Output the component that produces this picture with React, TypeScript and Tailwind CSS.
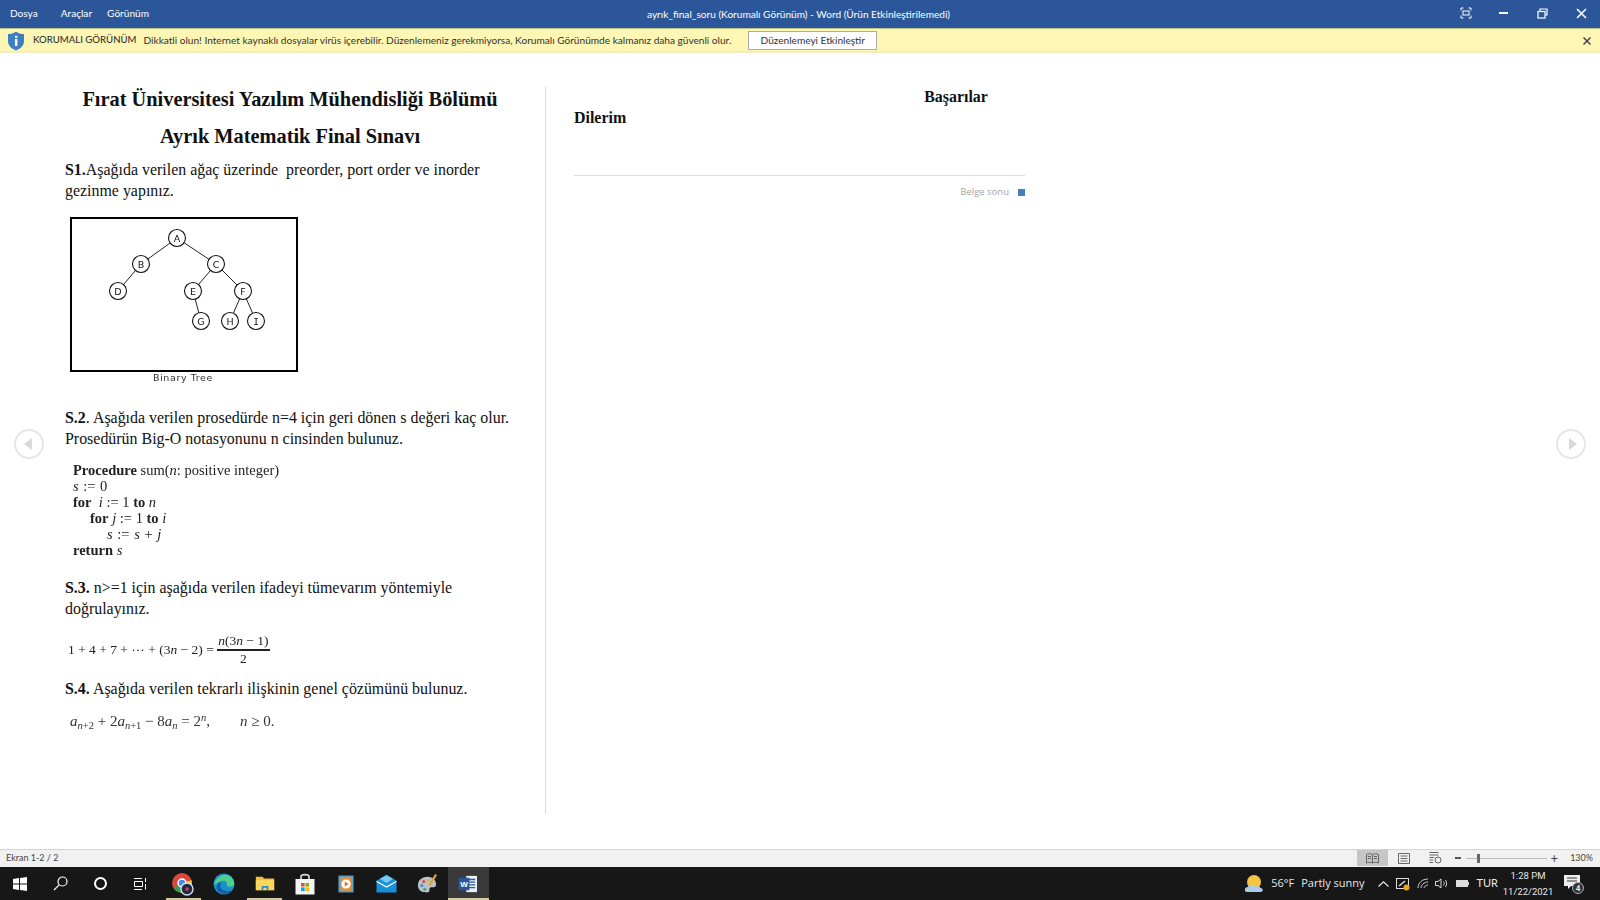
const serif = "font-['Liberation_Serif',serif]"

function Shield() {
  return (
    <svg width="18" height="20" viewBox="0 0 18 20">
      <path d="M9 0.5 C11.5 2.5 14 3 17 3 V10 C17 15 13 18 9 19.5 C5 18 1 15 1 10 V3 C4 3 6.5 2.5 9 0.5Z" fill="#3f7fc1" />
      <rect x="8" y="8" width="2.4" height="7" fill="#fff" />
      <rect x="8" y="4.8" width="2.4" height="2" fill="#fff" />
    </svg>
  )
}

function Tree() {
  const nodes: [string, number, number][] = [
    ['A', 107, 21], ['B', 71, 47], ['C', 146, 47], ['D', 48, 74], ['E', 123, 74],
    ['F', 173, 74], ['G', 131, 104], ['H', 160, 104], ['I', 186, 104],
  ]
  const edges = [[0, 1], [0, 2], [1, 3], [2, 4], [2, 5], [4, 6], [5, 7], [5, 8]]
  return (
    <svg width="228" height="155" viewBox="0 0 228 155" className="block">
      <rect x="1" y="1" width="226" height="153" fill="#fff" stroke="#000" strokeWidth="2" />
      {edges.map(([a, b], i) => (
        <line key={i} x1={nodes[a][1]} y1={nodes[a][2]} x2={nodes[b][1]} y2={nodes[b][2]} stroke="#222" strokeWidth="1" />
      ))}
      {nodes.map(([t, x, y]) => (
        <g key={t}>
          <circle cx={x} cy={y} r="8.5" fill="#fff" stroke="#111" strokeWidth="1.1" />
          <text x={x} y={y + 3.5} textAnchor="middle" fontSize="9.5" fontFamily={t === 'I' ? "'DejaVu Sans Mono',monospace" : "'DejaVu Sans',sans-serif"} fill="#111">{t}</text>
        </g>
      ))}
    </svg>
  )
}

function Body({ children, className = '' }: { children: React.ReactNode; className?: string }) {
  return <p className={`text-[15.93px] leading-[21px] text-[#111] ${className}`}>{children}</p>
}

function ChromeIcon() {
  return (
    <svg width="24" height="24" viewBox="0 0 24 24">
      <circle cx="11" cy="11" r="10" fill="#d9483b" />
      <path d="M11 11 L2.5 16 A10 10 0 0 0 14 20.5Z" fill="#3a9b50" />
      <path d="M11 11 L14 20.5 A10 10 0 0 0 20.5 8Z" fill="#f2c230" />
      <circle cx="11" cy="11" r="4" fill="#4a8be8" stroke="#fff" strokeWidth="1.5" />
      <circle cx="16" cy="17" r="6" fill="#1f2b3f" stroke="#cfe0f4" strokeWidth="1.4" />
      <circle cx="16" cy="17" r="1.8" fill="#d8336a" />
    </svg>
  )
}

function EdgeIcon() {
  return (
    <svg width="22" height="22" viewBox="0 0 22 22">
      <circle cx="11" cy="11" r="10.5" fill="#1e90c9" />
      <path d="M1 12 C2 5 9 1 14 2 C19 3 22 8 21 12 C20 14 16 14 14 13 C15 9 12 7 9 8 C5 9 3 11 1 12Z" fill="#4fd08a" />
      <path d="M9 8 C6 11 7 17 13 18 C16 19 19 17 20 16 C17 21 10 22 6 19 C2 16 3 10 9 8Z" fill="#0d5fa8" />
    </svg>
  )
}

function FolderIcon() {
  return (
    <svg width="20" height="17" viewBox="0 0 24 20">
      <path d="M1 2 H9 L11 4 H23 V18 H1Z" fill="#f0bf3f" />
      <rect x="1" y="6" width="22" height="12" fill="#fbd75b" />
      <path d="M8 18 V13 H16 V18 H14 V15 H10 V18Z" fill="#2b8ad6" />
    </svg>
  )
}

function StoreIcon() {
  return (
    <svg width="20" height="22" viewBox="0 0 20 22">
      <path d="M6 6 V3.5 C6 1 14 1 14 3.5 V6" fill="none" stroke="#ddd" strokeWidth="1.6" />
      <rect x="0.5" y="6" width="19" height="15.5" fill="#f4f4f4" />
      <rect x="6" y="10" width="3.6" height="3.6" fill="#e8532d" />
      <rect x="10.4" y="10" width="3.6" height="3.6" fill="#7fba00" />
      <rect x="6" y="14.4" width="3.6" height="3.6" fill="#00a4ef" />
      <rect x="10.4" y="14.4" width="3.6" height="3.6" fill="#ffb900" />
    </svg>
  )
}

function MediaIcon() {
  return (
    <svg width="16" height="18" viewBox="0 0 18 20">
      <rect x="0.5" y="0.5" width="17" height="19" fill="#5aa0c8" />
      <rect x="3" y="2.5" width="12" height="15" fill="#ef8f2f" />
      <circle cx="9" cy="10" r="5.2" fill="#fff" />
      <path d="M7.5 7.2 L12 10 L7.5 12.8Z" fill="#e86a1c" />
    </svg>
  )
}

function MailIcon() {
  return (
    <svg width="21" height="19" viewBox="0 0 22 20">
      <path d="M0.5 7 L11 0.5 L21.5 7 V19.5 H0.5Z" fill="#1690d8" />
      <path d="M0.5 7 L11 13 L21.5 7 V8.5 L11 14.5 L0.5 8.5Z" fill="#fff" />
      <path d="M4 5 L11 1.5 L18 5 L11 9.5Z" fill="#7cc9f2" />
    </svg>
  )
}

function PaintIcon() {
  return (
    <svg width="21" height="21" viewBox="0 0 22 22">
      <path d="M1 13 C1 7 6 4 11 4 C17 4 20 8 20 12 C20 15 17 15 15 15 C13 15 13 17 13 18 C13 20 11 21 8 20 C4 20 1 17 1 13Z" fill="#b9c3c9" />
      <circle cx="7" cy="9" r="1.6" fill="#e8483a" />
      <circle cx="12" cy="8" r="1.6" fill="#f2b632" />
      <circle cx="5" cy="13" r="1.6" fill="#3e8edc" />
      <circle cx="8" cy="17" r="1.6" fill="#4aa84e" />
      <path d="M12 12 L19 1 L21 2 L14 14Z" fill="#d9a441" />
    </svg>
  )
}

function WordIcon() {
  return (
    <svg width="20" height="18" viewBox="0 0 22 20">
      <rect x="9" y="1" width="12" height="18" fill="#e9f0fa" />
      <path d="M11 5 H19 M11 8 H19 M11 11 H19 M11 14 H19" stroke="#2b579a" strokeWidth="1.4" />
      <rect x="0.5" y="3" width="12" height="14" fill="#2b579a" />
      <text x="6.5" y="13.5" textAnchor="middle" fontSize="9" fontWeight="700" fill="#fff" fontFamily="'Liberation Sans',sans-serif">W</text>
    </svg>
  )
}

function WeatherIcon() {
  return (
    <svg width="20" height="20" viewBox="0 0 20 20">
      <circle cx="10" cy="8" r="7" fill="#f6c445" />
      <path d="M3 18 C0 18 0 13 4 13 C5 10 10 10 11 13 C13 11.5 16 12 16.5 14 C19.5 14 19.5 18 16.5 18Z" fill="#a8cdea" />
    </svg>
  )
}

function TaskbarSlot({ children, mark, active }: { children: React.ReactNode; mark?: boolean; active?: boolean }) {
  return (
    <div className={`relative flex h-full w-[40.7px] items-center justify-center ${active ? 'bg-[#3a3a3a]' : ''}`}>
      {children}
      {mark && <div className={`absolute bottom-0 h-[2px] bg-[#d9c9a0] ${active ? 'left-0 right-0' : 'left-[3px] right-[3px]'}`} />}
    </div>
  )
}

export default function App() {
  return (
    <div className="relative flex h-[900px] w-[1600px] flex-col overflow-hidden bg-white font-['Lato',sans-serif]">
      {/* title bar */}
      <header className="relative flex h-[28px] shrink-0 items-center bg-[#2b579a] text-[10.1px] text-white">
        <span className="ml-[10px]">Dosya</span>
        <span className="ml-[23px]">Araçlar</span>
        <span className="ml-[15px]">Görünüm</span>
        <span className="absolute left-[647px] top-[7px] whitespace-nowrap leading-[15px]">ayrık_final_soru (Korumalı Görünüm) - Word (Ürün Etkinleştirilemedi)</span>
        <div className="ml-auto flex items-center pb-[2px]">
          <svg width="12" height="12" viewBox="0 0 12 12" className="mr-[27px]" fill="none" stroke="#fff" strokeWidth="1">
            <path d="M1 3.5 V1 H3.5 M8.5 1 H11 V3.5 M11 8.5 V11 H8.5 M3.5 11 H1 V8.5" />
            <rect x="3" y="4" width="6" height="4" />
          </svg>
          <div className="mr-[29px] h-[2px] w-[9px] bg-white" />
          <svg width="11" height="11" viewBox="0 0 11 11" className="mr-[28px]" fill="none" stroke="#fff" strokeWidth="1.2">
            <rect x="1" y="3.5" width="7" height="6.5" />
            <path d="M3 3 V1 H10 V7 H8" />
          </svg>
          <svg width="11" height="11" viewBox="0 0 11 11" className="mr-[13px]" stroke="#fff" strokeWidth="1.6">
            <path d="M1 1 L10 10 M10 1 L1 10" />
          </svg>
        </div>
      </header>

      {/* protected view bar */}
      <div className="flex h-[25px] shrink-0 items-center border-t border-b-2 border-t-[#b9c487] border-b-[#f1ecc4] bg-[#fdf6b4] pt-[1px] text-[10.1px] text-[#333]">
        <div className="ml-[7px] mr-[8px]"><Shield /></div>
        <span className="text-[9.6px] font-medium">KORUMALI GÖRÜNÜM</span>
        <span className="ml-[7px]">Dikkatli olun! Internet kaynaklı dosyalar virüs içerebilir. Düzenlemeniz gerekmiyorsa, Korumalı Görünümde kalmanız daha güvenli olur.</span>
        <button className="ml-[17px] h-[19px] w-[129px] border border-[#ababab] bg-white text-[10.1px] text-[#333]">Düzenlemeyi Etkinleştir</button>
        <svg width="8" height="8" viewBox="0 0 8 8" className="ml-auto mr-[9px]" stroke="#444" strokeWidth="1.5">
          <path d="M0.5 0.5 L7.5 7.5 M7.5 0.5 L0.5 7.5" />
        </svg>
      </div>

      {/* document */}
      <main className={`relative flex min-h-0 flex-1 pl-[65px] pt-[34px] ${serif}`}>
        <section className="w-[480px] shrink-0">
          <h1 className="w-[450px] text-center text-[20.35px] font-bold leading-[24px] text-[#111]">Fırat Üniversitesi Yazılım Mühendisliği Bölümü</h1>
          <h1 className="mt-[13px] w-[450px] text-center text-[20.35px] font-bold leading-[24px] text-[#111]">Ayrık Matematik Final Sınavı</h1>
          <Body className="mt-[11px]"><b>S1.</b>Aşağıda verilen ağaç üzerinde&nbsp; preorder, port order ve inorder<br />gezinme yapınız.</Body>
          <div className="ml-[5px] mt-[16px]">
            <div className="blur-[0.3px]"><Tree /></div>
            <p className="mt-[-1px] w-[226px] text-center font-['DejaVu_Sans',sans-serif] text-[9.5px] leading-[13px] tracking-[0.6px] text-[#333] blur-[0.3px]">Binary Tree</p>
          </div>
          <Body className="mt-[23px]"><b>S.2</b>. Aşağıda verilen prosedürde n=4 için geri dönen s değeri kaç olur.<br />Prosedürün Big-O notasyonunu n cinsinden bulunuz.</Body>
          <div className="ml-[8px] mt-[13px] text-[14.5px] leading-[16px] text-[#222] blur-[0.3px]">
            <p><b>Procedure</b> sum(<i>n</i>: positive integer)</p>
            <p className="[word-spacing:1px]"><i>s</i> := 0</p>
            <p><b>for</b>&nbsp; <i>i</i> := 1 <b>to</b> <i>n</i></p>
            <p className="pl-[17px]"><b>for</b> <i>j</i> := 1 <b>to</b> <i>i</i></p>
            <p className="pl-[34px] [word-spacing:1px]"><i>s</i> := <i>s</i> + <i>j</i></p>
            <p><b>return</b> <i>s</i></p>
          </div>
          <Body className="mt-[19px]"><b>S.3.</b> n&gt;=1 için aşağıda verilen ifadeyi tümevarım yöntemiyle<br />doğrulayınız.</Body>
          <div className="ml-[3px] mt-[14px] flex items-center text-[13.5px] leading-[16px] text-[#222] blur-[0.3px]">
            <span>1 + 4 + 7 + ··· + (3<i>n</i> − 2) =&nbsp;</span>
            <span className="flex flex-col items-center">
              <span className="border-b-2 border-[#222] px-[1px]"><i>n</i>(3<i>n</i> − 1)</span>
              <span>2</span>
            </span>
          </div>
          <Body className="mt-[11px]"><b>S.4.</b> Aşağıda verilen tekrarlı ilişkinin genel çözümünü bulunuz.</Body>
          <p className="ml-[5px] mt-[14px] whitespace-pre text-[15px] leading-[16px] text-[#333] blur-[0.3px]">
            <i>a</i><sub className="text-[10.5px]"><i>n</i>+2</sub> + 2<i>a</i><sub className="text-[10.5px]"><i>n</i>+1</sub> − 8<i>a</i><sub className="text-[10.5px]"><i>n</i></sub> = 2<sup className="text-[10.5px]"><i>n</i></sup>,{'        '}<i>n</i> ≥ 0.
          </p>
        </section>

        <div className="mb-[35px] w-px bg-[#d9d9d9]" />

        <section className="ml-[28px] mt-[-1px] w-[451px] text-[15.93px] font-bold leading-[21px] text-[#111]">
          <p className="whitespace-nowrap pl-[313px] text-center">Başarılar</p>
          <p>Dilerim</p>
          <div className="mt-[47px] h-px bg-[#dcdcdc]" />
          <div className="mt-[10px] flex items-center justify-end font-['Open_Sans',sans-serif] text-[9.5px] font-normal leading-[12px] text-[#a6a6a6]">
            Belge sonu
            <span className="ml-[9px] h-[7px] w-[7px] bg-[#4a7ebb]" />
          </div>
        </section>

        <button className="absolute left-[14px] top-[376px] flex h-[30px] w-[30px] items-center justify-center rounded-full border-2 border-[#e6e6e6] bg-white">
          <span className="mr-[3px] h-0 w-0 border-y-[6px] border-r-[8px] border-y-transparent border-r-[#d9d9d9]" />
        </button>
        <button className="absolute left-[1556px] top-[376px] flex h-[30px] w-[30px] items-center justify-center rounded-full border-2 border-[#e6e6e6] bg-white">
          <span className="ml-[3px] h-0 w-0 border-y-[6px] border-l-[8px] border-y-transparent border-l-[#d9d9d9]" />
        </button>
      </main>

      {/* status bar */}
      <footer className="flex h-[18px] shrink-0 items-center border-t border-[#d4d4d4] bg-[#f1f1f1] pb-[1px] text-[9px] text-[#444]">
        <span className="ml-[6px]">Ekran 1-2 / 2</span>
        <div className="ml-auto flex h-full items-center">
          <div className="flex h-full w-[31px] items-center justify-center bg-[#c6c6c6]">
            <svg width="13" height="11" viewBox="0 0 13 11" fill="none" stroke="#666"><path d="M6.5 1.5 C5 0.5 2 0.5 0.5 1.5 V10 C2 9 5 9 6.5 10 C8 9 11 9 12.5 10 V1.5 C11 0.5 8 0.5 6.5 1.5Z M6.5 1.5 V10 M2 3.5 H5 M2 5.5 H5 M8 3.5 H11 M8 5.5 H11" /></svg>
          </div>
          <div className="flex h-full w-[32px] items-center justify-center">
            <svg width="12" height="11" viewBox="0 0 12 11" fill="none" stroke="#666"><path d="M0.5 0.5 H11.5 V10.5 H0.5Z M2.5 3 H9.5 M2.5 5.5 H9.5 M2.5 8 H9.5" /></svg>
          </div>
          <div className="flex h-full w-[32px] items-center justify-center">
            <svg width="13" height="12" viewBox="0 0 13 12" fill="none" stroke="#666"><path d="M0.5 0.5 H9.5 M0.5 3 H9.5 M0.5 5.5 H5 M0.5 8 H4 M0.5 10.5 H4" /><circle cx="9" cy="8" r="3" /></svg>
          </div>
          <div className="ml-[3px] h-[1.5px] w-[6px] bg-[#555]" />
          <div className="relative ml-[5px] h-px w-[81px] bg-[#bdbdbd]">
            <div className="absolute left-[11px] top-[-4px] h-[9px] w-[3px] bg-[#666]" />
          </div>
          <span className="ml-[4px] text-[13px] leading-none text-[#444]">+</span>
          <span className="ml-[12px] mr-[7px] text-[#444]">130%</span>
        </div>
      </footer>

      {/* windows taskbar */}
      <nav className="flex h-[33px] shrink-0 items-center bg-[#171717] text-white">
        <div className="flex h-full w-[40px] items-center justify-center">
          <svg width="14" height="14" viewBox="0 0 14 14" fill="#fff"><path d="M0 2 L6 1.1 V6.6 H0Z M7 1 L14 0 V6.6 H7Z M0 7.4 H6 V12.9 L0 12Z M7 7.4 H14 V14 L7 13Z" /></svg>
        </div>
        <div className="flex h-full w-[40px] items-center justify-center">
          <svg width="15" height="15" viewBox="0 0 15 15" fill="none" stroke="#fff" strokeWidth="1.2"><circle cx="9.5" cy="5.5" r="4.5" /><path d="M6.2 8.8 L1 14" /></svg>
        </div>
        <div className="flex h-full w-[40px] items-center justify-center">
          <div className="h-[13px] w-[13px] rounded-full border-2 border-white" />
        </div>
        <div className="mr-[3px] flex h-full w-[40px] items-center justify-center">
          <svg width="15" height="14" viewBox="0 0 15 14" fill="none" stroke="#fff"><path d="M1 1.5 H9 M1 12.5 H9 M1.5 4.5 H9.5 V9.5 H1.5Z M12.5 1 V5 M12.5 7 V12.5" /></svg>
        </div>
        <TaskbarSlot mark><ChromeIcon /></TaskbarSlot>
        <TaskbarSlot><EdgeIcon /></TaskbarSlot>
        <TaskbarSlot mark><FolderIcon /></TaskbarSlot>
        <TaskbarSlot><StoreIcon /></TaskbarSlot>
        <TaskbarSlot><MediaIcon /></TaskbarSlot>
        <TaskbarSlot><MailIcon /></TaskbarSlot>
        <TaskbarSlot><PaintIcon /></TaskbarSlot>
        <TaskbarSlot mark active><WordIcon /></TaskbarSlot>

        <div className="ml-auto flex h-full items-center font-['Open_Sans',sans-serif] text-[11px] text-[#e8e8e8]">
          <WeatherIcon />
          <span className="ml-[7px]">56°F</span>
          <span className="ml-[7px]">Partly sunny</span>
          <svg width="11" height="6" viewBox="0 0 11 6" className="ml-[13px]" fill="none" stroke="#eee" strokeWidth="1.1"><path d="M0.5 5.5 L5.5 0.8 L10.5 5.5" /></svg>
          <svg width="14" height="14" viewBox="0 0 14 14" className="ml-[7px]" fill="none">
            <rect x="0.5" y="1.5" width="12" height="10" stroke="#ddd" />
            <path d="M3 9 L9 4" stroke="#ddd" strokeWidth="1.5" />
            <circle cx="10.5" cy="10.5" r="3" fill="#f2a01e" />
          </svg>
          <svg width="12" height="11" viewBox="0 0 12 11" className="ml-[7px]" fill="none" stroke="#ccc"><path d="M1 10 C1 5 5 1 11 1 M4 10 C4 7 7 4 11 4 M7 10 C7 9 9 7 11 7" /></svg>
          <svg width="13" height="11" viewBox="0 0 13 11" className="ml-[6px]" fill="none" stroke="#ddd"><path d="M0.5 3.5 H3 L6 1 V10 L3 7.5 H0.5Z M8.5 3.5 C9.5 4.5 9.5 6.5 8.5 7.5 M10.5 2 C12 4 12 7 10.5 9" /></svg>
          <svg width="13" height="7" viewBox="0 0 13 7" className="ml-[8px]"><rect x="0.5" y="0.5" width="11" height="6" fill="#ddd" stroke="#ddd" /><rect x="12" y="2" width="1" height="3" fill="#ddd" /></svg>
          <span className="ml-[8px] font-['Lato',sans-serif] text-[11px]">TUR</span>
          <div className="ml-[2px] w-[56px] text-center font-['Roboto',sans-serif] text-[9.5px] leading-[16px]">
            <div>1:28 PM</div>
            <div>11/22/2021</div>
          </div>
          <div className="relative ml-[8px] mr-[16px] h-[18px] w-[20px]">
            <svg width="16" height="14" viewBox="0 0 16 14" fill="#eee"><path d="M0 0 H16 V11 H7 L4 14 V11 H0Z" /><path d="M3 3 H13 M3 6 H13" stroke="#333" /></svg>
            <span className="absolute bottom-[-1px] right-0 flex h-[12px] w-[12px] items-center justify-center rounded-full border border-[#aaa] bg-[#333] text-[8px] font-bold leading-none">4</span>
          </div>
        </div>
      </nav>
    </div>
  )
}
